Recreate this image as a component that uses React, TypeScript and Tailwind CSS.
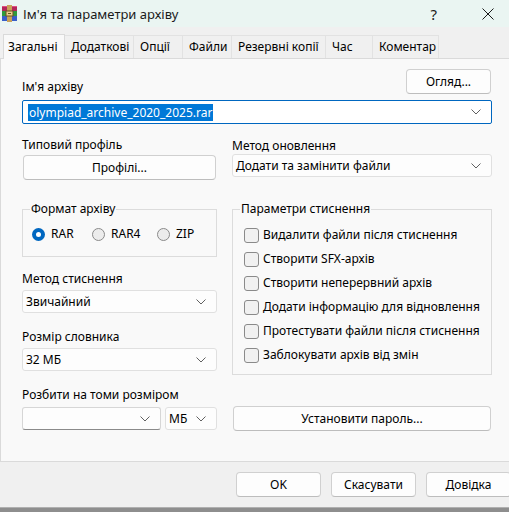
import React from "react";

const Chevron = () => (
  <svg width="10" height="6" viewBox="0 0 10 6" className="shrink-0">
    <path d="M0.5 0.5 L5 5 L9.5 0.5" fill="none" stroke="#606060" strokeWidth="1" />
  </svg>
);

const Btn = ({ children, className = "" }: { children: React.ReactNode; className?: string }) => (
  <div
    className={
      "flex items-center justify-center rounded-[4px] border border-[#d0d0d0] border-b-[#bdbdbd] bg-[#fdfdfd] text-[12px] text-black " +
      className
    }
  >
    {children}
  </div>
);

const Drop = ({ value, className = "" }: { value: string; className?: string }) => (
  <div
    className={
      "flex h-[23px] items-center justify-between rounded-[3px] border border-[#e0e0e0] bg-[#fdfdfd] pl-[3px] pr-[10px] text-[12px] text-black " +
      className
    }
  >
    <span>{value}</span>
    <Chevron />
  </div>
);

const Radio = ({ checked, label }: { checked?: boolean; label: string }) => (
  <div className="flex items-center gap-[6px]">
    {checked ? (
      <div className="flex h-[13px] w-[13px] items-center justify-center rounded-full bg-[#0067c0]">
        <div className="h-[5px] w-[5px] rounded-full bg-white" />
      </div>
    ) : (
      <div className="h-[13px] w-[13px] rounded-full border border-[#8a8a8a] bg-[#ececec]" />
    )}
    <span>{label}</span>
  </div>
);

const Check = ({ label }: { label: string }) => (
  <div className="flex h-[24px] items-center gap-[4px]">
    <div className="h-[15px] w-[15px] rounded-[3px] border border-[#8a8a8a] bg-[#f1f1f1]" />
    <span>{label}</span>
  </div>
);

const Group = ({
  legend,
  children,
  className = "",
}: {
  legend: string;
  children: React.ReactNode;
  className?: string;
}) => (
  <div className={"relative border border-[#dcdcdc] " + className}>
    <span className="absolute -top-[9px] left-[7px] bg-[#f9f9f9] px-[1px] leading-[16px]">{legend}</span>
    {children}
  </div>
);

const tabs: { label: string; w: string }[] = [
  { label: "Додаткові", w: "w-[69px]" },
  { label: "Опції", w: "w-[49px]" },
  { label: "Файли", w: "w-[49px]" },
  { label: "Резервні копії", w: "w-[94px]" },
  { label: "Час", w: "w-[47px]" },
  { label: "Коментар", w: "w-[66px]" },
];

const RarIcon = () => (
  <svg width="17" height="17" viewBox="0 0 17 17" className="shrink-0">
    <rect x="1" y="1" width="15" height="5" fill="#b3265a" />
    <rect x="1" y="6" width="15" height="5" fill="#2f9a3c" />
    <rect x="1" y="11" width="15" height="5" fill="#3a5fc8" />
    <rect x="1" y="1" width="15" height="1" fill="#e05080" />
    <rect x="6" y="0" width="5" height="17" fill="#c9a15a" />
    <rect x="5" y="6" width="7" height="5" fill="#e8d08a" stroke="#6b5020" strokeWidth="1" />
    <rect x="7" y="8" width="3" height="1" fill="#6b5020" />
  </svg>
);

export default function App() {
  return (
    <div className="h-[512px] w-[509px] overflow-hidden bg-[#8e8e8e] font-['Noto_Sans','Segoe_UI',sans-serif] text-[12px] text-black">
      <div className="flex h-[508px] flex-col border-b border-[#b0b0b0] bg-[#f0f0f0]">
        {/* Title bar */}
        <div className="flex h-[27px] shrink-0 items-center bg-[#eaf5f2] pl-[1px]">
          <RarIcon />
          <span className="ml-[5px] text-[13px] leading-[20px] text-[#1a1a1a]">Ім'я та параметри архіву</span>
          <span className="ml-auto mr-[45px] text-[15px] leading-[20px] text-[#1a1a1a]">?</span>
          <svg width="12" height="12" viewBox="0 0 12 12" className="mr-[15px]">
            <path d="M0.5 0.5 L11.5 11.5 M11.5 0.5 L0.5 11.5" stroke="#1a1a1a" strokeWidth="1" />
          </svg>
        </div>

        {/* Tabs */}
        <div className="flex h-[31px] shrink-0 items-end pl-[3px]">
          <div className="relative z-10 -mb-[1px] flex h-[25px] w-[62px] items-center border border-b-0 border-[#dadada] bg-[#f9f9f9] pl-[4px]">
            Загальні
          </div>
          {tabs.map((t) => (
            <div
              key={t.label}
              className={
                "flex h-[23px] items-center border border-b-0 border-l-0 border-[#e2e2e2] bg-[#f0f0f0] pl-[6px] " + t.w
              }
            >
              {t.label}
            </div>
          ))}
        </div>

        {/* Panel */}
        <div className="flex h-[404px] w-[520px] shrink-0 flex-col border border-[#dadada] bg-[#f9f9f9] pl-[21px] pt-[10px]">
          <div className="flex w-[470px] items-end justify-between">
            <span className="mb-[-1px] leading-[16px]">Ім'я архіву</span>
            <Btn className="mr-[1px] h-[25px] w-[85px]">Огляд...</Btn>
          </div>
          <div className="mt-[6px] flex h-[24px] w-[470px] items-center justify-between rounded-[2px] border border-[#0067c0] bg-white pl-[5px] pr-[10px]">
            <span className="bg-[#0078d7] px-[1px] leading-[17px] text-white">olympiad_archive_2020_2025.rar</span>
            <Chevron />
          </div>

          <div className="grid w-[470px] grid-cols-[195px_260px] gap-x-[15px]">
            {/* Left column */}
            <div className="flex flex-col">
              <span className="mt-[13px] leading-[16px]">Типовий профіль</span>
              <Btn className="ml-[1px] mt-[2px] h-[25px] w-[193px]">Профілі...</Btn>
              <Group legend="Формат архіву" className="mt-[29px] h-[48px]">
                <div className="flex items-center pl-[9px] pt-[15px]">
                  <div className="w-[60px]">
                    <Radio checked label="RAR" />
                  </div>
                  <div className="w-[65px]">
                    <Radio label="RAR4" />
                  </div>
                  <Radio label="ZIP" />
                </div>
              </Group>
              <span className="mt-[14px] leading-[16px]">Метод стиснення</span>
              <Drop value="Звичайний" className="mt-[3px]" />
              <span className="mt-[16px] leading-[16px]">Розмір словника</span>
              <Drop value="32 МБ" className="mt-[3px]" />
            </div>

            {/* Right column */}
            <div className="flex flex-col">
              <span className="mt-[14px] leading-[16px]">Метод оновлення</span>
              <Drop value="Додати та замінити файли" />
              <Group legend="Параметри стиснення" className="mt-[32px] h-[166px]">
                <div className="flex flex-col pl-[11px] pt-[13px]">
                  <Check label="Видалити файли після стиснення" />
                  <Check label="Створити SFX-архів" />
                  <Check label="Створити неперервний архів" />
                  <Check label="Додати інформацію для відновлення" />
                  <Check label="Протестувати файли після стиснення" />
                  <Check label="Заблокувати архів від змін" />
                </div>
              </Group>
            </div>
          </div>

          <span className="mt-[12px] leading-[16px]">Розбити на томи розміром</span>
          <div className="mt-[3px] grid w-[470px] grid-cols-[195px_260px] items-center gap-x-[15px]">
            <div className="flex gap-[4px]">
              <div className="flex h-[23px] w-[139px] items-center justify-end rounded-[3px] border border-[#d6d6d6] border-b-[#8a8a8a] bg-[#fdfdfd] pr-[10px]">
                <Chevron />
              </div>
              <Drop value="МБ" className="w-[52px]" />
            </div>
            <Btn className="ml-[1px] h-[25px] w-[258px]">Установити пароль...</Btn>
          </div>
        </div>

        {/* Bottom buttons */}
        <div className="flex gap-[10px] pl-[236px] pt-[10px]">
          <Btn className="h-[25px] w-[85px] shrink-0 border-[#0067c0] border-b-[#0067c0]">OK</Btn>
          <Btn className="h-[25px] w-[85px] shrink-0">Скасувати</Btn>
          <Btn className="h-[25px] w-[85px] shrink-0">Довідка</Btn>
        </div>
      </div>
    </div>
  );
}
